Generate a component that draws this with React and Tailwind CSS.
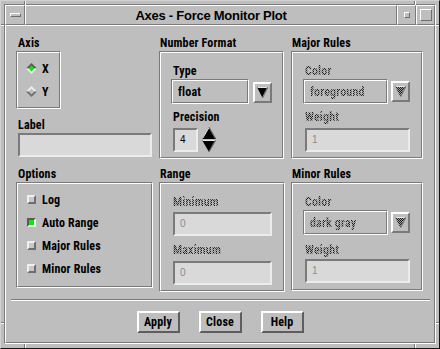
import React from "react";

const STIP =
  "bg-[repeating-conic-gradient(#1a1a1a_0%_25%,#a6a6a6_0%_50%)] bg-[length:2px_2px] bg-clip-text text-transparent";
const LF = "font-['Roboto_Condensed','Liberation_Sans',Arial,sans-serif]";

function Lbl({ children, className = "", stip = false }) {
  return (
    <div
      className={`h-[14px] leading-[14px] text-[12px] font-bold tracking-[0.15px] whitespace-nowrap ${LF} ${
        stip ? STIP : "text-black"
      } ${className}`}
    >
      {children}
    </div>
  );
}

function Etched({ className = "", children }) {
  return (
    <div
      className={`border border-t-[#7a7a7a] border-l-[#7a7a7a] border-r-white border-b-white ${className}`}
    >
      <div className="h-full w-full border border-t-white border-l-white border-r-[#7a7a7a] border-b-[#7a7a7a]">
        {children}
      </div>
    </div>
  );
}

function Raised({ className = "", children }) {
  return (
    <div
      className={`border border-t-white border-l-white border-r-[#7a7a7a] border-b-[#7a7a7a] ${className}`}
    >
      {children}
    </div>
  );
}

function Field({ className = "", value = "", disabled = false }) {
  return (
    <div
      className={`border-2 border-t-[#7a7a7a] border-l-[#7a7a7a] border-r-[#ececec] border-b-[#ececec] bg-[#d9d9d9] flex items-center pl-[5px] text-[10px] leading-[12px] font-['Liberation_Sans',Arial,sans-serif] ${
        disabled ? "text-[#8c8c8c]" : "text-black"
      } ${className}`}
    >
      {value}
    </div>
  );
}

function OptBox({ className = "", text, disabled = false }) {
  return (
    <div
      className={`border border-t-[#7a7a7a] border-l-[#7a7a7a] border-r-white border-b-white ${className}`}
    >
      <div className="h-full w-full border border-t-white border-l-white border-r-[#7a7a7a] border-b-[#7a7a7a] flex items-center pl-[5px] pt-[1px]">
        <Lbl stip={disabled}>{text}</Lbl>
      </div>
    </div>
  );
}

function ArrowBtn({ className = "", disabled = false }) {
  return (
    <div
      className={`w-[19px] h-[21px] border-2 border-t-white border-l-white border-r-[#7a7a7a] border-b-[#7a7a7a] flex items-center justify-center ${className}`}
    >
      <svg width="11" height="11" viewBox="0 0 11 11">
        <defs>
          <pattern id="stp" width="2" height="2" patternUnits="userSpaceOnUse">
            <rect x="0" y="0" width="2" height="2" fill="#a0a0a0" />
            <rect x="0" y="0" width="1" height="1" fill="#1a1a1a" />
            <rect x="1" y="1" width="1" height="1" fill="#1a1a1a" />
          </pattern>
        </defs>
        <polygon points="0,0 11,0 5.5,11" fill={disabled ? "url(#stp)" : "#000"} />
        <line x1="0.5" y1="0.5" x2="10.5" y2="0.5" stroke="#e8e8e8" strokeWidth="1" />
        <line x1="10.6" y1="0.5" x2="5.6" y2="10.5" stroke="#7a7a7a" strokeWidth="1.4" />
      </svg>
    </div>
  );
}

function Diamond({ on }) {
  return (
    <svg width="11" height="11" viewBox="0 0 11 11">
      <polygon points="0,5.5 5.5,0 11,5.5" fill={on ? "#5a5a5a" : "#eeeeee"} />
      <polygon points="0,5.5 5.5,11 11,5.5" fill={on ? "#eeeeee" : "#6e6e6e"} />
      <polygon points="2.6,5.5 5.5,2.6 8.4,5.5 5.5,8.4" fill={on ? "#00f000" : "#bebebe"} />
    </svg>
  );
}

function Check({ on }) {
  return on ? (
    <div className="w-[9px] h-[9px] border-2 border-t-[#5a5a5a] border-l-[#5a5a5a] border-r-[#f0f0f0] border-b-[#f0f0f0] bg-[#00f000]" />
  ) : (
    <div className="w-[9px] h-[9px] border-2 border-t-[#f0f0f0] border-l-[#f0f0f0] border-r-[#6e6e6e] border-b-[#6e6e6e] bg-[#c8c8c8]" />
  );
}

function Spinner() {
  return (
    <div className="flex flex-col ml-[4px] -mt-[1px]">
      <svg width="14" height="13" viewBox="0 0 14 13">
        <polygon points="7,0 14,12 0,12" fill="#000" />
        <line x1="7" y1="0.5" x2="0.6" y2="11.5" stroke="#e8e8e8" strokeWidth="1" />
        <line x1="7.2" y1="0.5" x2="13.4" y2="11.5" stroke="#6e6e6e" strokeWidth="1.2" />
      </svg>
      <svg width="14" height="12" viewBox="0 0 14 12">
        <polygon points="0,0 14,0 7,12" fill="#000" />
        <line x1="0.5" y1="0.5" x2="13.5" y2="0.5" stroke="#e8e8e8" strokeWidth="1" />
        <line x1="13.4" y1="0.5" x2="7.2" y2="11.5" stroke="#6e6e6e" strokeWidth="1.2" />
      </svg>
    </div>
  );
}

function Btn({ children }) {
  return (
    <div className="w-[43px] h-[22px] border-2 border-t-white border-l-white border-r-[#5e5e5e] border-b-[#5e5e5e] flex items-center justify-center">
      <Lbl>{children}</Lbl>
    </div>
  );
}

function Notch({ className }) {
  return <div className={`absolute ${className}`} />;
}

export default function App() {
  return (
    <div className="w-[440px] h-[349px] bg-[#bebebe] border border-t-[#d2d2d2] border-l-[#d2d2d2] border-r-[#141414] border-b-[#141414] pt-[3px] pl-[3px] pr-[3px] pb-[4px] flex flex-col relative font-['Liberation_Sans',Arial,sans-serif] select-none overflow-hidden">
      {/* frame resize notches */}
      <Notch className="left-[23px] top-0 w-[2px] h-[4px] border-l border-l-[#7a7a7a] border-r border-r-white" />
      <Notch className="left-[413px] top-0 w-[2px] h-[4px] border-l border-l-[#7a7a7a] border-r border-r-white" />
      <Notch className="left-[23px] bottom-0 w-[2px] h-[4px] border-l border-l-[#7a7a7a] border-r border-r-white" />
      <Notch className="left-[413px] bottom-0 w-[2px] h-[4px] border-l border-l-[#7a7a7a] border-r border-r-white" />
      <Notch className="left-0 top-[23px] w-[3px] h-[2px] border-t border-t-[#7a7a7a] border-b border-b-white" />
      <Notch className="right-0 top-[23px] w-[3px] h-[2px] border-t border-t-[#7a7a7a] border-b border-b-white" />
      <Notch className="left-0 top-[321px] w-[3px] h-[2px] border-t border-t-[#7a7a7a] border-b border-b-white" />
      <Notch className="right-0 top-[321px] w-[3px] h-[2px] border-t border-t-[#7a7a7a] border-b border-b-white" />

      <div className="flex-1 flex flex-col border border-t-[#7a7a7a] border-l-[#7a7a7a] border-r-white border-b-white">
        {/* title bar */}
        <div className="h-[20px] flex shrink-0">
          <Raised className="w-[20px] flex items-center justify-center">
            <div className="w-[11px] h-[4px] border border-t-white border-l-white border-r-[#6e6e6e] border-b-[#6e6e6e]" />
          </Raised>
          <Raised className="flex-1 flex items-center justify-center">
            <div className="text-[13px] leading-[15px] font-bold tracking-[-0.25px] text-black whitespace-nowrap">
              Axes - Force Monitor Plot
            </div>
          </Raised>
          <Raised className="w-[19px] flex items-center justify-center">
            <div className="w-[6px] h-[6px] border border-t-white border-l-white border-r-[#6e6e6e] border-b-[#6e6e6e]" />
          </Raised>
          <Raised className="w-[19px] flex items-center justify-center">
            <div className="w-[12px] h-[12px] border border-t-white border-l-white border-r-[#6e6e6e] border-b-[#6e6e6e]" />
          </Raised>
        </div>

        {/* client area */}
        <Raised className="flex-1 flex flex-col">
          <div className="mt-[10px] ml-[10px] h-[256px] flex items-start">
            {/* column 1 */}
            <div className="w-[137px] flex flex-col">
              <Lbl className="ml-[2px]">Axis</Lbl>
              <Etched className="mt-[1px] w-[45px] h-[58px]">
                <div className="pt-[4px] pl-[8px] flex flex-col">
                  <div className="h-[23px] flex items-center gap-[5px]">
                    <Diamond on />
                    <Lbl>X</Lbl>
                  </div>
                  <div className="h-[23px] flex items-center gap-[5px]">
                    <Diamond on={false} />
                    <Lbl>Y</Lbl>
                  </div>
                </div>
              </Etched>
              <Lbl className="ml-[2px] mt-[9px]">Label</Lbl>
              <Field className="mt-[1px] ml-[2px] w-[134px] h-[24px]" />
              <Lbl className="ml-[2px] mt-[10px]">Options</Lbl>
              <Etched className="mt-[1px] w-[137px] h-[106px]">
                <div className="pt-[4px] pl-[9px] flex flex-col">
                  {[
                    ["Log", false],
                    ["Auto Range", true],
                    ["Major Rules", false],
                    ["Minor Rules", false],
                  ].map(([t, on]) => (
                    <div key={t} className="h-[23px] flex items-center gap-[6px]">
                      <Check on={on} />
                      <Lbl>{t}</Lbl>
                    </div>
                  ))}
                </div>
              </Etched>
            </div>

            {/* column 2 */}
            <div className="w-[126px] ml-[6px] flex flex-col">
              <Lbl className="ml-[1px]">Number Format</Lbl>
              <Etched className="mt-[1px] w-[125px] h-[108px]">
                <div className="pt-[11px] pl-[12px] flex flex-col">
                  <Lbl>Type</Lbl>
                  <div className="mt-[1px] -ml-[2px] flex items-start">
                    <OptBox className="w-[78px] h-[25px]" text="float" />
                    <ArrowBtn className="ml-[4px] mt-[3px]" />
                  </div>
                  <Lbl className="mt-[6px]">Precision</Lbl>
                  <div className="mt-[4px] flex items-start">
                    <Field className="w-[25px] h-[24px] pl-[5px]" value="4" />
                    <Spinner />
                  </div>
                </div>
              </Etched>
              <Lbl className="ml-[1px] mt-[8px]">Range</Lbl>
              <Etched className="mt-[1px] w-[126px] h-[110px]">
                <div className="pt-[11px] pl-[12px] flex flex-col items-start">
                  <Lbl stip>Minimum</Lbl>
                  <Field className="mt-[3px] w-[99px] h-[24px]" value="0" disabled />
                  <Lbl stip className="mt-[7px]">
                    Maximum
                  </Lbl>
                  <Field className="mt-[4px] w-[99px] h-[24px]" value="0" disabled />
                </div>
              </Etched>
            </div>

            {/* column 3 */}
            <div className="w-[132px] ml-[6px] flex flex-col">
              <Lbl className="ml-[1px]">Major Rules</Lbl>
              <Etched className="mt-[1px] w-[132px] h-[108px]">
                <div className="pt-[11px] pl-[12px] flex flex-col items-start">
                  <Lbl stip>Color</Lbl>
                  <div className="mt-[1px] -ml-[2px] flex items-start">
                    <OptBox className="w-[85px] h-[25px]" text="foreground" disabled />
                    <ArrowBtn className="ml-[3px] mt-[2px]" disabled />
                  </div>
                  <Lbl stip className="mt-[6px]">
                    Weight
                  </Lbl>
                  <Field className="mt-[4px] w-[105px] h-[24px]" value="1" disabled />
                </div>
              </Etched>
              <Lbl className="ml-[1px] mt-[8px]">Minor Rules</Lbl>
              <Etched className="mt-[1px] w-[132px] h-[109px]">
                <div className="pt-[11px] pl-[12px] flex flex-col items-start">
                  <Lbl stip>Color</Lbl>
                  <div className="mt-[1px] -ml-[2px] flex items-start">
                    <OptBox className="w-[85px] h-[25px]" text="dark gray" disabled />
                    <ArrowBtn className="ml-[3px] mt-[2px]" disabled />
                  </div>
                  <Lbl stip className="mt-[8px]">
                    Weight
                  </Lbl>
                  <Field className="mt-[2px] w-[105px] h-[24px]" value="1" disabled />
                </div>
              </Etched>
            </div>
          </div>

          {/* separator */}
          <div className="mt-[7px] ml-[5px] mr-[4px] h-[2px] border-t border-t-[#7a7a7a] border-b border-b-white" />

          {/* buttons */}
          <div className="mt-[10px] flex justify-center gap-[19px]">
            <Btn>Apply</Btn>
            <Btn>Close</Btn>
            <Btn>Help</Btn>
          </div>
        </Raised>
      </div>
    </div>
  );
}
